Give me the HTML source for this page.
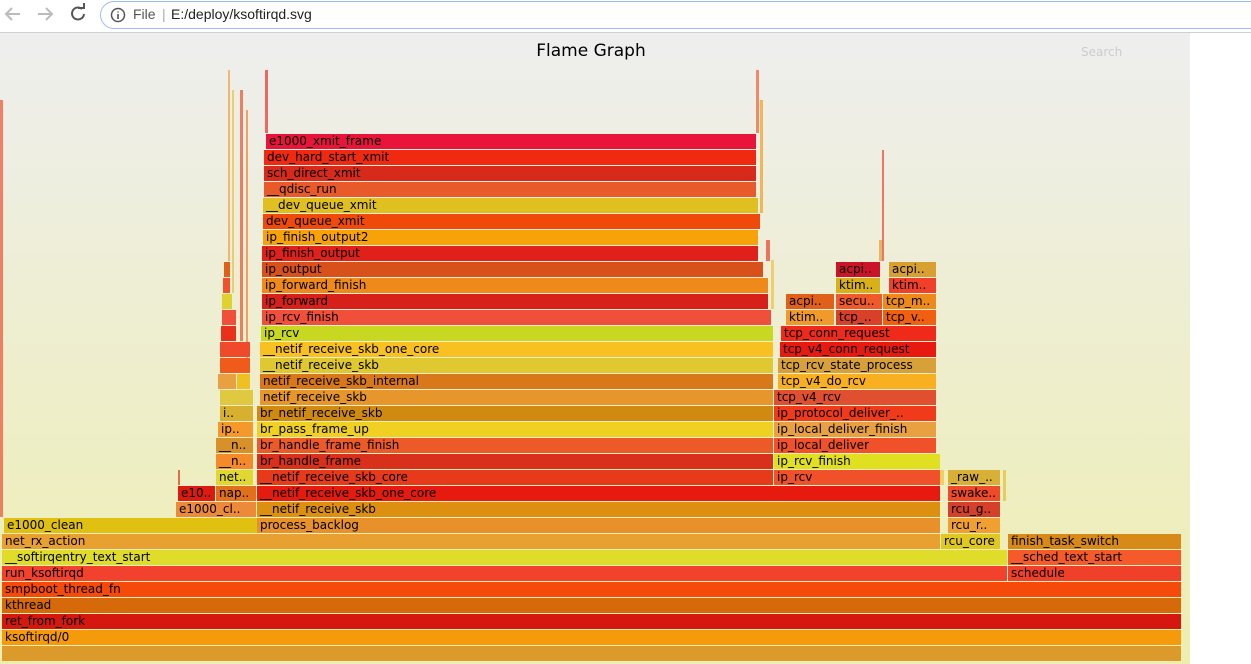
<!DOCTYPE html><html><head><meta charset="utf-8"><style>
body{margin:0;width:1251px;height:664px;overflow:hidden;background:#fff;font-family:"DejaVu Sans","Liberation Sans",sans-serif;position:relative}
.bar{position:absolute;left:0;top:0;width:1251px;height:32px;background:#fff;border-bottom:1px solid #d0d0d0}
.omni{position:absolute;left:100px;top:1px;width:1170px;height:26px;border:1.5px solid #9fbaf0;border-radius:15px;font-family:"Liberation Sans",sans-serif;font-size:14px;color:#222}
.fg{position:absolute;left:0;top:33px;width:1190px;height:631px;background:linear-gradient(#eeeeee,#eeeeb0)}
.f{position:absolute;height:15px;font-size:12px;line-height:15px;color:#000;white-space:nowrap;overflow:hidden;padding-left:3px;box-sizing:border-box}
</style></head><body>
<div class="bar">
<svg width="100" height="32" style="position:absolute;left:0;top:0" fill="none" stroke-width="2">
<path d="M20 14H7M12 8l-6 6 6 6" stroke="#bbb"/>
<path d="M38 14h13M46 8l6 6-6 6" stroke="#bbb"/>
<path d="M82 9a6 6 0 1 0 2 5" stroke="#555"/><path d="M78 8h6v-5" stroke="#555"/>
</svg>
<div class="omni"><svg width="16" height="16" style="position:absolute;left:9px;top:5px"><circle cx="8" cy="8" r="6.5" stroke="#555" stroke-width="1.5" fill="none"/><path d="M8 7v5M8 4.5v1" stroke="#555" stroke-width="1.6"/></svg><span style="position:absolute;left:32px;top:4px;color:#555">File</span><span style="position:absolute;left:61px;top:4px;color:#aaa">|</span><span style="position:absolute;left:70px;top:4px">E:/deploy/ksoftirqd.svg</span></div>
</div>
<div class="fg">
<div style="position:absolute;left:0;width:1182px;top:8px;text-align:center;font-size:17px;color:#000">Flame Graph</div>
<div style="position:absolute;left:1081px;top:12px;font-size:12px;color:#ccc">Search</div>
</div>
<div id="g"></div>
<script>
var d=[
[646,2,1181,'#dc9a2a',''],[630,2,1181,'#f59a0a','ksoftirqd/0'],[614,2,1181,'#d5170f','ret_from_fork'],[598,2,1181,'#d66a0a','kthread'],[582,2,1181,'#f54a0a','smpboot_thread_fn'],
[566,2,1007,'#f2412c','run_ksoftirqd'],[566,1008,1181,'#f0402a','schedule'],
[550,2,1007,'#e0dc2a','__softirqentry_text_start'],[550,1008,1181,'#f55a2a','__sched_text_start'],
[534,2,940,'#e8a030','net_rx_action'],[534,941,1000,'#e0c820','rcu_core'],[534,1008,1181,'#d88a18','finish_task_switch'],
[518,4,257,'#e0c010','e1000_clean'],[518,257,940,'#e8902a','process_backlog'],[518,948,1000,'#f0a030','rcu_r..'],
[502,176,256,'#ec8a3a','e1000_cl..'],[502,257,940,'#dd9010','__netif_receive_skb'],[502,948,1000,'#d4402a','rcu_g..'],
[486,178,215,'#dd1a10','e10..'],[486,216,256,'#e0701a','nap..'],[486,257,940,'#e61a0e','__netif_receive_skb_one_core'],[486,948,1000,'#ef4a2a','swake..'],
[470,216,253,'#e0d830','net..'],[470,257,773,'#e63a1a','__netif_receive_skb_core'],[470,774,940,'#f0502a','ip_rcv'],[470,948,1000,'#d8b038','_raw_..'],
[454,216,253,'#f58a2a','__n..'],[454,257,773,'#d8301a','br_handle_frame'],[454,774,940,'#e0e020','ip_rcv_finish'],
[438,216,253,'#d8902a','__n..'],[438,257,773,'#ec5a2a','br_handle_frame_finish'],[438,774,936,'#f0502a','ip_local_deliver'],
[422,218,253,'#f59a2a','ip..'],[422,257,773,'#f0d020','br_pass_frame_up'],[422,774,936,'#e8a040','ip_local_deliver_finish'],
[406,220,253,'#d8b030','i..'],[406,257,773,'#d08a10','br_netif_receive_skb'],[406,774,936,'#f03a1a','ip_protocol_deliver_..'],
[390,220,253,'#e0c840',''],[390,260,773,'#e6962a','netif_receive_skb'],[390,774,936,'#e05030','tcp_v4_rcv'],
[374,218,236,'#e8a040',''],[374,237,250,'#f0c020',''],[374,260,773,'#d8781a','netif_receive_skb_internal'],[374,778,936,'#f8b020','tcp_v4_do_rcv'],
[358,220,250,'#f05a1a',''],[358,260,773,'#e0c830','__netif_receive_skb'],[358,778,936,'#d8a038','tcp_rcv_state_process'],
[342,220,250,'#ef4a2a',''],[342,260,773,'#f8c020','__netif_receive_skb_one_core'],[342,780,936,'#e81a10','tcp_v4_conn_request'],
[326,221,236,'#e8301a',''],[326,261,773,'#c8d820','ip_rcv'],[326,781,936,'#ef2a1a','tcp_conn_request'],
[310,222,236,'#f0503a',''],[310,262,771,'#f0503a','ip_rcv_finish'],[310,786,834,'#ef9a2a','ktim..'],[310,836,882,'#d8402a','tcp_..'],[310,883,936,'#f06010','tcp_v..'],
[294,222,232,'#e0d030',''],[294,262,768,'#d8201a','ip_forward'],[294,786,834,'#e0601a','acpi..'],[294,836,882,'#ee5a2a','secu..'],[294,883,936,'#ee8a1a','tcp_m..'],
[278,223,230,'#f0502a',''],[278,262,768,'#ef8a1a','ip_forward_finish'],[278,836,880,'#d8b018','ktim..'],[278,889,936,'#f0402a','ktim..'],
[262,224,230,'#e0601a',''],[262,262,763,'#d8501a','ip_output'],[262,836,880,'#cc1428','acpi..'],[262,889,936,'#d8a030','acpi..'],
[246,262,758,'#e0201a','ip_finish_output'],[230,263,758,'#f8a20a','ip_finish_output2'],[214,263,760,'#f04a0a','dev_queue_xmit'],
[198,263,758,'#e0c020','__dev_queue_xmit'],[182,264,756,'#e85a2a','__qdisc_run'],[166,264,756,'#d82a1a','sch_direct_xmit'],
[150,264,756,'#f02a10','dev_hard_start_xmit'],[134,266,756,'#e8143a','e1000_xmit_frame']
];
var h='';
var s=[[0,100,518,3,'#f05030'],[228,70,262,2,'#f0a040'],[232,90,294,2,'#e8c040'],[240,90,342,3,'#e8502a'],[246,110,374,2,'#f08030'],[265,70,134,3,'#e8302a'],[756,70,134,3,'#f06030'],[760,100,214,3,'#f0a020'],[766,240,262,4,'#e8402a'],[771,260,310,3,'#f0c040'],[882,150,262,2,'#f04030'],[879,240,262,3,'#e0a030'],[1003,470,502,3,'#e0c030'],[178,470,486,2,'#d83a1a'],[940,470,486,4,'#f0c040']];
s.forEach(function(r){h+='<div style="position:absolute;left:'+r[0]+'px;top:'+r[1]+'px;width:'+r[3]+'px;height:'+(r[2]-r[1]-1)+'px;background:'+r[4]+';opacity:.7"></div>'});
d.forEach(function(r){h+='<div class="f" style="top:'+r[0]+'px;left:'+r[1]+'px;width:'+(r[2]-r[1])+'px;background:'+r[3]+'">'+r[4]+'</div>'});
document.getElementById('g').innerHTML=h;
</script>
</body></html>
